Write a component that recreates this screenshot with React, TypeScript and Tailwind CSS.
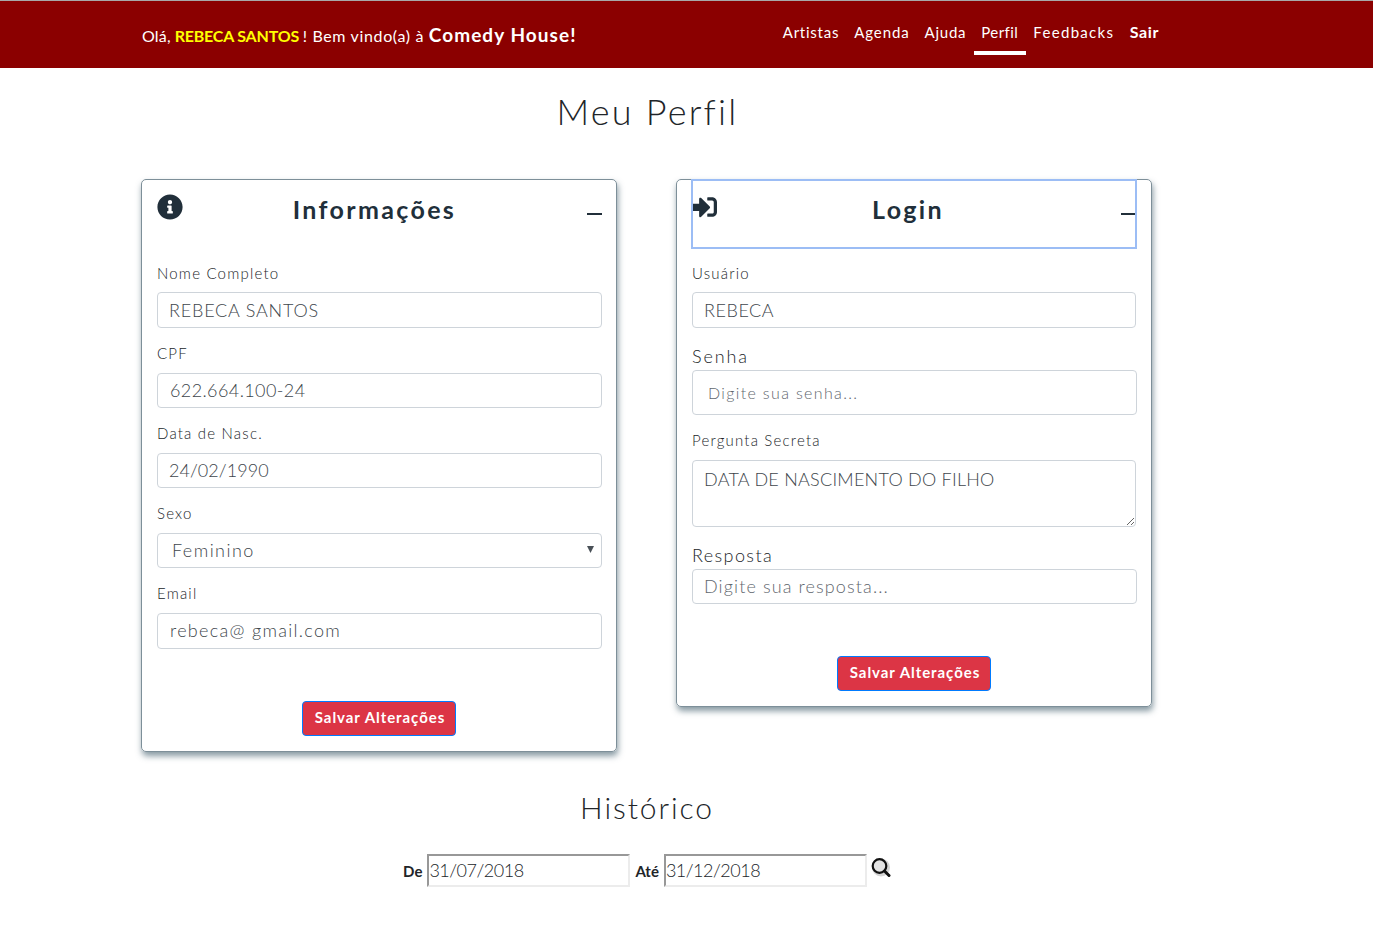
import type { ReactNode } from 'react';
import { FaInfoCircle, FaSignInAlt } from 'react-icons/fa';

const FIELD_CLASS =
  'block w-full rounded-[4px] border border-[#ced4da] bg-white px-[11px] text-[18px] font-light text-[#40464c] outline-none placeholder:text-[#5f676e]';

const DATE_CLASS =
  'h-[33px] w-[203px] border-2 border-t-[#989898] border-r-[#ececec] border-b-[#ececec] border-l-[#989898] pb-[2px] text-[18px] font-light tracking-[-0.5px]';

const NAV_ITEMS = [
  { label: 'Artistas', tracking: 'tracking-[0.75px]' },
  { label: 'Agenda', tracking: 'tracking-[0.9px]' },
  { label: 'Ajuda', tracking: 'tracking-[0.75px]' },
  { label: 'Perfil', tracking: 'tracking-[0.45px]' },
  { label: 'Feedbacks', tracking: 'tracking-[1.3px]' },
];

function Label({ children, className = '' }: { children: ReactNode; className?: string }) {
  return (
    <label className={`block h-[24px] text-[15px] font-light tracking-[1.2px] text-[#212529] ${className}`}>
      {children}
    </label>
  );
}

function Field({
  label,
  value,
  height,
  labelClass = 'leading-[20px]',
  inputClass = '',
}: {
  label: string;
  value: string;
  height: string;
  labelClass?: string;
  inputClass?: string;
}) {
  return (
    <div className="mb-[15px]">
      <Label className={`mb-[6px] ${labelClass}`}>{label}</Label>
      <input readOnly value={value} className={`${FIELD_CLASS} ${height} ${inputClass}`} />
    </div>
  );
}

function CardHeader({
  icon,
  title,
  titleClass,
  className = '',
}: {
  icon: ReactNode;
  title: string;
  titleClass: string;
  className?: string;
}) {
  return (
    <div className={`flex h-[68px] items-start text-[#212f3a] ${className}`}>
      <div className="mt-[14px] w-[26px] shrink-0">{icon}</div>
      <h3 className={`mt-[13px] flex-1 text-center text-[25px] leading-[33px] font-bold tracking-[2.35px] ${titleClass}`}>{title}</h3>
      <div className="mt-[33px] h-[2px] w-[15px] shrink-0 bg-[#212f3a]" />
    </div>
  );
}

function SaveButton({ className = '' }: { className?: string }) {
  return (
    <button
      type="button"
      className={`ml-[145px] block h-[35px] w-[154px] rounded-[4px] border border-[#007bff] bg-[#dc3545] pb-[2px] pl-[2px] text-[15px] font-bold tracking-[0.95px] text-white ${className}`}
    >
      Salvar Alterações
    </button>
  );
}

export default function App() {
  return (
    <div className="min-h-[939px] bg-white font-['Lato','Liberation_Sans',sans-serif] text-[#212529]">
      <header className="h-[68px] border-t border-[#a8a8a8] bg-[#8b0000] text-white">
        <div className="ml-[141px] flex w-[1026px] items-start justify-between">
          <p className="mt-[22px] ml-px text-[16px] leading-[24px] tracking-[0.7px]">
            <span className="mr-[-1px] tracking-[0.2px]">Olá,</span>{' '}
            <strong className="font-bold tracking-[-0.2px] text-[#ffff00]">REBECA SANTOS</strong>
            <span className="ml-[-1px] tracking-[0.65px]"> ! Bem vindo(a) à </span>
            <strong className="text-[19px] font-bold tracking-[1.05px]">Comedy House!</strong>
          </p>
          <nav className="flex">
            {NAV_ITEMS.map((item) => (
              <a
                key={item.label}
                className={`h-[54px] border-b-4 px-[7.5px] pt-[19px] text-[15px] leading-[24px] ${item.tracking} ${
                  item.label === 'Perfil' ? 'border-white' : 'border-transparent'
                }`}
              >
                {item.label}
              </a>
            ))}
            <a className="px-[8px] pt-[19px] text-[16px] leading-[24px] font-bold tracking-[0.6px]">Sair</a>
          </nav>
        </div>
      </header>

      <main className="ml-[141px] w-[1011px]">
        <h1 className="pt-[21px] pl-[2px] text-center text-[36px] leading-[45px] font-light tracking-[2.2px]">Meu Perfil</h1>

        <div className="mt-[45px] flex items-start gap-[59px]">
          <section className="h-[573px] w-[476px] rounded-[5px] border border-[#7d8f99] pr-[14px] pl-[15px] shadow-[1px_4px_6px_rgba(55,85,100,0.6)]">
            <CardHeader icon={<FaInfoCircle size={26} />} title="Informações" titleClass="pr-[21px]" className="mb-[14px]" />
            <Field label="Nome Completo" value="REBECA SANTOS" height="h-[36px]" labelClass="leading-[22px]" inputClass="tracking-[0.8px]" />
            <Field label="CPF" value="622.664.100-24" height="h-[35px]" inputClass="!pl-[12px] pb-px tracking-[0.4px]" />
            <Field label="Data de Nasc." value="24/02/1990" height="h-[35px]" inputClass="pb-px tracking-[0.05px]" />
            <div className="mb-[15px]">
              <Label className="mb-[6px] leading-[20px]">Sexo</Label>
              <div className="relative">
                <select className={`${FIELD_CLASS} h-[35px] appearance-none !pl-[14px] pb-px tracking-[1.45px]`} defaultValue="Feminino">
                  <option>Feminino</option>
                  <option>Masculino</option>
                </select>
                <svg viewBox="0 0 7 7" className="pointer-events-none absolute top-[13px] right-[8px] h-[7px] w-[7px]">
                  <path d="M0 0h7L3.5 7z" fill="#495057" />
                </svg>
              </div>
            </div>
            <Field label="Email" value="rebeca@ gmail.com" height="h-[36px]" inputClass="!pl-[12px] pb-[2px] tracking-[1.3px]" />
            <SaveButton className="mt-[52px]" />
          </section>

          <section className="h-[528px] w-[476px] rounded-[5px] border border-[#7d8f99] pr-[14px] pl-[15px] shadow-[1px_4px_6px_rgba(55,85,100,0.6)]">
            <CardHeader
              icon={<FaSignInAlt size={26} className="-ml-px" />}
              title="Login"
              titleClass="pr-[23px]"
              className="mr-px mb-[14px] outline-2 -outline-offset-1 outline-[#9cbdf5]"
            />
            <div className="mr-px">
              <Label className="mb-[6px] leading-[22px]">Usuário</Label>
              <input readOnly value="REBECA" className={`${FIELD_CLASS} h-[36px] tracking-[0.55px]`} />
            </div>
            <label className="mt-[17px] mb-px block h-[24px] text-[18px] leading-[22px] font-light tracking-[1.9px]">Senha</label>
            <input placeholder="Digite sua senha..." className={`${FIELD_CLASS} h-[45px] !pl-[15px] !text-[16px] tracking-[1.35px]`} />
            <Label className="mt-[14px] mb-[7px] leading-[22px]">Pergunta Secreta</Label>
            <textarea
              readOnly
              value="DATA DE NASCIMENTO DO FILHO"
              className={`${FIELD_CLASS} h-[67px] !w-[444px] py-[6px] leading-[24px] tracking-[0.25px]`}
            />
            <label className="mt-[17px] mb-px block h-[24px] text-[18px] leading-[22px] font-light tracking-[1.4px]">Resposta</label>
            <input placeholder="Digite sua resposta..." className={`${FIELD_CLASS} h-[35px] pb-[2px] tracking-[1.12px]`} />
            <SaveButton className="mt-[52px]" />
          </section>
        </div>

        <h2 className="mt-[35px] pl-px text-center text-[30px] leading-[40px] font-light tracking-[1.9px]">Histórico</h2>

        <div className="mt-[27px] flex items-start justify-center pl-px text-[15px] font-bold">
          <span className="mt-[5px] mr-[5px] leading-[24px]">De</span>
          <input readOnly value="31/07/2018" className={DATE_CLASS} />
          <span className="mt-[5px] mr-[5px] ml-[5px] leading-[24px]">Até</span>
          <input readOnly value="31/12/2018" className={DATE_CLASS} />
          <svg viewBox="0 0 20 20" className="mt-[4px] ml-[4px] h-[20px] w-[20px]">
            <circle cx="10" cy="9.5" r="9" fill="#d4d4d4" />
            <circle cx="8.5" cy="8" r="6.8" fill="#e4e4e4" stroke="#111" strokeWidth="2.2" />
            <path d="M13.5 13l4.5 4.5" stroke="#111" strokeWidth="3" strokeLinecap="round" />
          </svg>
        </div>
      </main>
    </div>
  );
}
